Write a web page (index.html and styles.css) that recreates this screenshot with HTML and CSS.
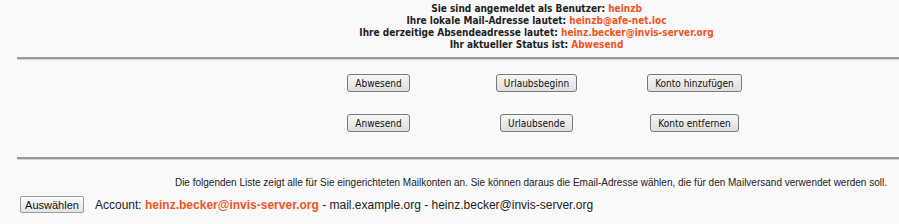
FILE: index.html
```html
<!doctype html>
<html lang="de">
<head>
    <meta charset="UTF-8">
    <title>Mailkonten</title>
    <link rel="stylesheet" href="styles.css">
</head>
<body>
<div class="status">
    <div>Sie sind angemeldet als Benutzer: <span class="hl">heinzb</span></div>
    <div>Ihre lokale Mail-Adresse lautet: <span class="hl">heinzb@afe-net.loc</span></div>
    <div>Ihre derzeitige Absendeadresse lautet: <span class="hl">heinz.becker@invis-server.org</span></div>
    <div>Ihr aktueller Status ist: <span class="hl">Abwesend</span></div>
</div>

<hr class="sep">

<div class="actions">
    <div class="cell"><button class="button">Abwesend</button></div>
    <div class="cell"><button class="button">Urlaubsbeginn</button></div>
    <div class="cell"><button class="button">Konto hinzufügen</button></div>
    <div class="cell"><button class="button">Anwesend</button></div>
    <div class="cell"><button class="button">Urlaubsende</button></div>
    <div class="cell"><button class="button">Konto entfernen</button></div>
</div>

<hr class="sep sep-low">

<p class="info">Die folgenden Liste zeigt alle für Sie eingerichteten Mailkonten an. Sie können daraus die Email-Adresse wählen, die für den Mailversand verwendet werden soll.</p>

<div class="account">
    <button class="button button-mac">Auswählen</button>
    <span>Account: <b class="hl">heinz.becker@invis-server.org</b> - mail.example.org - heinz.becker@invis-server.org</span>
</div>
</body>
</html>
```

FILE: styles.css
```css
body {
    margin: 0;
    background: #f9f9f9;
    color: #222;
    font-family: "DejaVu Sans Condensed", "DejaVu Sans", sans-serif;
}

.status {
    padding: 3px 0 0 174px;
    text-align: center;
    font-size: 10px;
    font-weight: bold;
    line-height: 12px;
}

.hl {
    color: #f05324;
}

.sep {
    margin: 6px 0 0 17px;
    height: 0;
    border: 0;
    border-top: 2px solid #9a9a9a;
    border-bottom: 1px solid #d4d4d4;
}

.sep-low {
    margin-top: 25px;
}

.actions {
    display: grid;
    grid-template-columns: repeat(3, 158px);
    row-gap: 22px;
    justify-content: center;
    padding: 14px 0 0 174px;
}

.cell {
    display: flex;
    justify-content: center;
}

.button {
    height: 18px;
    padding: 0 7px;
    font-family: "DejaVu Sans Condensed", "DejaVu Sans", sans-serif;
    font-size: 10px;
    color: #111;
    border: 1px solid #7a7a7a;
    border-radius: 3px;
    background: linear-gradient(#f6f6f6, #dedede);
    outline: none;
}

.info {
    margin: 17px 12px 0 0;
    text-align: right;
    font-family: "Liberation Sans", Arial, sans-serif;
    font-size: 10px;
    color: #222;
}

.account {
    display: flex;
    align-items: center;
    gap: 11px;
    margin: 8px 0 0 20px;
    font-family: "Liberation Sans", Arial, sans-serif;
    font-size: 12px;
}

.button-mac {
    width: 64px;
    height: 17px;
    padding: 0;
    font-family: "Liberation Sans", Arial, sans-serif;
    font-size: 11px;
    border-color: #9a9a9a;
    border-radius: 2px;
    background: linear-gradient(#fdfdfd, #e4e4e4);
}
```
